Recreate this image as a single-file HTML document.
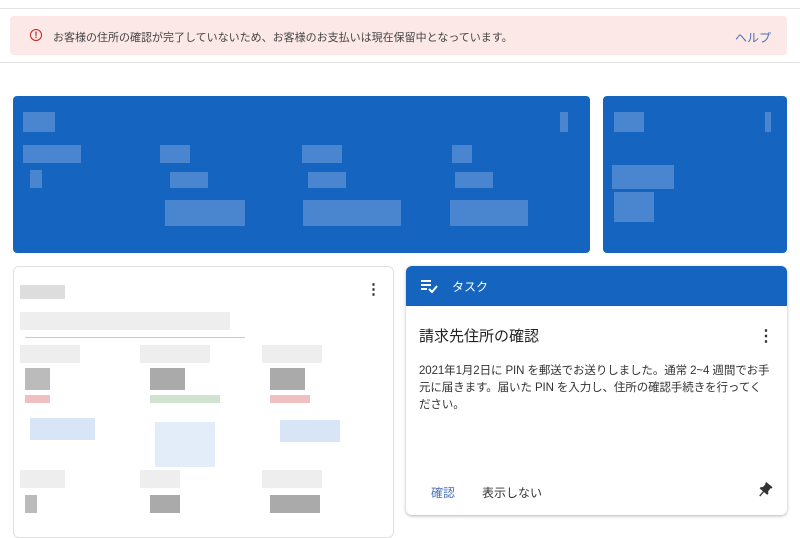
<!DOCTYPE html><html><head><meta charset="utf-8"><style>
body{margin:0;width:800px;height:525px;overflow:hidden;background:#fff;font-family:"Liberation Sans","Noto Sans CJK JP",sans-serif;position:relative}
.a{position:absolute}
.b{position:absolute;background:#4a86d0}
.g{position:absolute;background:#ddd}
</style></head><body>
<div class="a" style="left:0;top:8px;width:800px;height:1px;background:#e4e4e4"></div>
<div class="a" style="left:10px;top:16px;width:777px;height:39px;background:#fce8e6;border-radius:4px"></div>
<div class="a" style="left:30px;top:29px;width:10px;height:10px;border:1.5px solid #c5221f;border-radius:50%;color:#c5221f;font-size:9px;line-height:10px;text-align:center;font-weight:bold">!</div>
<div class="a" style="left:53px;top:29px;font-size:11px;color:#444">お客様の住所の確認が完了していないため、お客様のお支払いは現在保留中となっています。</div>
<div class="a" style="left:735px;top:29px;font-size:12px;color:#4a70b8">ヘルプ</div>
<div class="a" style="left:0;top:62px;width:800px;height:1px;background:#e4e4e4"></div>
<div class="a" style="left:13px;top:96px;width:577px;height:157px;background:#1565c0;border-radius:4px"></div>
<div class="a" style="left:603px;top:96px;width:184px;height:157px;background:#1565c0;border-radius:4px"></div>
<div class="b" style="left:23px;top:112px;width:32px;height:20px"></div>
<div class="b" style="left:23px;top:145px;width:58px;height:18px"></div>
<div class="b" style="left:30px;top:170px;width:12px;height:18px"></div>
<div class="b" style="left:160px;top:145px;width:30px;height:18px"></div>
<div class="b" style="left:170px;top:172px;width:38px;height:16px"></div>
<div class="b" style="left:165px;top:200px;width:80px;height:26px"></div>
<div class="b" style="left:302px;top:145px;width:40px;height:18px"></div>
<div class="b" style="left:308px;top:172px;width:38px;height:16px"></div>
<div class="b" style="left:303px;top:200px;width:98px;height:26px"></div>
<div class="b" style="left:452px;top:145px;width:20px;height:18px"></div>
<div class="b" style="left:455px;top:172px;width:38px;height:16px"></div>
<div class="b" style="left:450px;top:200px;width:78px;height:26px"></div>
<div class="b" style="left:614px;top:112px;width:30px;height:20px"></div>
<div class="b" style="left:612px;top:165px;width:62px;height:24px"></div>
<div class="b" style="left:614px;top:192px;width:40px;height:30px"></div>
<div class="b" style="left:560px;top:112px;width:8px;height:20px"></div>
<div class="b" style="left:765px;top:112px;width:6px;height:20px"></div>
<div class="a" style="left:13px;top:266px;width:379px;height:270px;border:1px solid #e0e0e0;border-radius:6px"></div>
<div class="g" style="left:20px;top:285px;width:45px;height:14px"></div>
<div class="g" style="left:20px;top:312px;width:210px;height:18px;background:#eee"></div>
<div class="a" style="left:25px;top:337px;width:220px;height:1px;background:#ccc"></div>
<div class="g" style="left:20px;top:345px;width:60px;height:18px;background:#eee"></div>
<div class="g" style="left:140px;top:345px;width:70px;height:18px;background:#eee"></div>
<div class="g" style="left:262px;top:345px;width:60px;height:18px;background:#eee"></div>
<div class="g" style="left:25px;top:368px;width:25px;height:22px;background:#bbb"></div>
<div class="g" style="left:150px;top:368px;width:35px;height:22px;background:#aaa"></div>
<div class="g" style="left:270px;top:368px;width:35px;height:22px;background:#aaa"></div>
<div class="a" style="left:25px;top:395px;width:25px;height:8px;background:#f0c0c0"></div>
<div class="a" style="left:150px;top:395px;width:70px;height:8px;background:#cfe3cf"></div>
<div class="a" style="left:270px;top:395px;width:40px;height:8px;background:#f0c0c0"></div>
<div class="a" style="left:30px;top:418px;width:65px;height:22px;background:#d7e5f7"></div>
<div class="a" style="left:155px;top:422px;width:60px;height:45px;background:#e3edf9"></div>
<div class="a" style="left:280px;top:420px;width:60px;height:22px;background:#d7e5f7"></div>
<div class="g" style="left:20px;top:470px;width:45px;height:18px;background:#eee"></div>
<div class="g" style="left:140px;top:470px;width:40px;height:18px;background:#eee"></div>
<div class="g" style="left:262px;top:470px;width:60px;height:18px;background:#eee"></div>
<div class="g" style="left:25px;top:495px;width:12px;height:18px;background:#bbb"></div>
<div class="g" style="left:150px;top:495px;width:30px;height:18px;background:#aaa"></div>
<div class="g" style="left:270px;top:495px;width:50px;height:18px;background:#aaa"></div>
<div class="a" style="left:366px;top:287px;font-size:15px;font-weight:bold;color:#333;line-height:5px">⋮</div>
<div class="a" style="left:406px;top:266px;width:381px;height:249px;border-radius:6px;box-shadow:0 1px 3px rgba(0,0,0,.3);overflow:hidden">
<div style="height:40px;background:#1565c0;color:#fff;font-size:12px;position:relative">
<svg class="a" style="left:14px;top:13px" width="18" height="14"><path d="M1 2h10M1 6h10M1 10h6" stroke="#fff" stroke-width="2"/><path d="M9 10l3 3 5-6" stroke="#fff" stroke-width="2" fill="none"/></svg>
<span class="a" style="left:46px;top:12px">タスク</span></div>
<div class="a" style="left:13px;top:59px;font-size:15px;color:#222">請求先住所の確認</div>
<div class="a" style="left:352px;top:60px;font-size:16px;font-weight:bold;color:#333">⋮</div>
<div class="a" style="left:13px;top:97px;width:352px;font-size:11.5px;line-height:17px;color:#333;letter-spacing:-0.1px">2021年1月2日に PIN を郵送でお送りしました。通常 2~4 週間でお手元に届きます。届いた PIN を入力し、住所の確認手続きを行ってください。</div>
<div class="a" style="left:25px;top:218px;font-size:12px;color:#4a70b8">確認</div>
<div class="a" style="left:76px;top:218px;font-size:12px;color:#333">表示しない</div>
<svg class="a" style="left:348px;top:215px" width="20" height="20" viewBox="0 0 24 24"><path d="M16 9V4h1V2H7v2h1v5l-2 2v2h5.2v7h1.6v-7H18v-2z" fill="#333" transform="rotate(40 12 12)"/></svg>
</div>
</body></html>
